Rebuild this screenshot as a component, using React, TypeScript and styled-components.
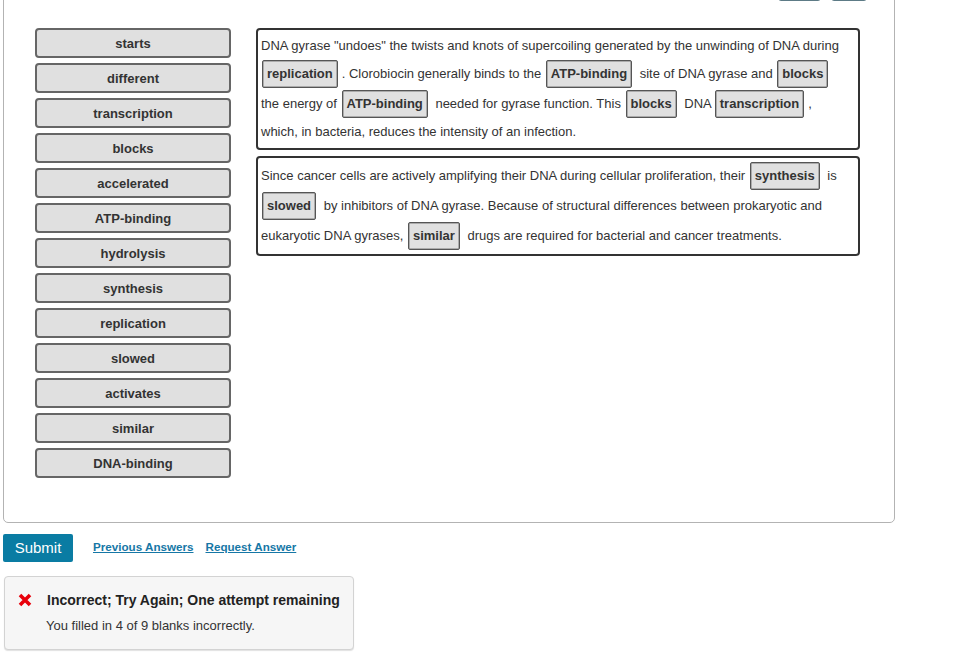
import * as React from 'react';
import styled, { createGlobalStyle } from 'styled-components';

const GlobalStyle = createGlobalStyle`
	html, body {
		margin: 0;
		padding: 0;
		background: #fff;
		font-family: 'Liberation Sans', Arial, Helvetica, sans-serif;
		color: #333;
	}
`;

const Page = styled.div`
	padding: 0 3px;
	width: 964px;
	overflow: hidden;
	height: 657px;
	box-sizing: border-box;
`;

const Card = styled.div`
	margin-top: -36px;
	width: 892px;
	box-sizing: border-box;
	border: 1px solid #b3b3b3;
	border-radius: 5px;
`;

const Toolbar = styled.div`
	display: flex;
	justify-content: flex-end;
	align-items: flex-end;
	gap: 10px;
	height: 36px;
	padding-right: 27px;
`;

interface ToolButtonProps {
	w: number;
}

const ToolButton = styled.div<ToolButtonProps>`
	width: ${props => props.w}px;
	height: 24px;
	box-sizing: border-box;
	border: 1px solid #5d7b86;
	border-radius: 3px;
`;

const Body = styled.div`
	display: flex;
	align-items: flex-start;
	gap: 25px;
	padding: 27px 0 44px 31px;
`;

const TileColumn = styled.div`
	display: flex;
	flex-direction: column;
	gap: 5px;
	width: 196px;
`;

const Tile = styled.div`
	height: 30px;
	box-sizing: border-box;
	border: 2px solid #666;
	border-radius: 4px;
	background: #e0e0e0;
	display: flex;
	align-items: center;
	justify-content: center;
	font-size: 13px;
	font-weight: bold;
	color: #333;
`;

const PanelColumn = styled.div`
	display: flex;
	flex-direction: column;
	gap: 6px;
	width: 604px;
`;

const Panel = styled.div`
	box-sizing: border-box;
	border: 2px solid #333;
	border-radius: 4px;
	padding: 3px 10px 3px 3px;
	font-size: 13px;
	line-height: 26px;
	color: #333;
`;

const Blank = styled.span`
	display: inline-block;
	box-sizing: border-box;
	height: 28px;
	line-height: 26px;
	margin: 1px 4px 1px 1px;
	padding: 0 4px;
	border: 1px solid #555;
	border-radius: 2px;
	background: #e0e0e0;
	font-weight: bold;
	vertical-align: baseline;
	box-shadow: inset 0 0 0 0.5px #777;
`;

const ActionRow = styled.div`
	display: flex;
	align-items: center;
	gap: 20px;
	margin-top: 11px;
`;

const SubmitButton = styled.button`
	height: 28px;
	width: 70px;
	border: none;
	border-radius: 2px;
	background: #0a7ca3;
	color: #fff;
	font-family: inherit;
	font-size: 15px;
	padding: 0 0 1px;
`;

const Links = styled.div`
	display: flex;
	gap: 12px;
	padding-bottom: 4px;
`;

const LinkText = styled.a`
	color: #1677a6;
	font-size: 11.65px;
	font-weight: bold;
	text-decoration: underline;
	cursor: pointer;
`;

const Feedback = styled.div`
	margin-top: 14px;
	margin-left: 1px;
	width: 350px;
	height: 74px;
	box-sizing: border-box;
	border: 1px solid #d3d3d3;
	border-radius: 4px;
	background: #f6f6f6;
	box-shadow: 0 1px 1px rgba(0, 0, 0, 0.12);
	padding: 13px 0 0 13px;
`;

const FeedbackTitle = styled.div`
	display: flex;
	align-items: center;
	gap: 15px;
	font-size: 14px;
	font-weight: bold;
	color: #222;
	height: 20px;
`;

const FeedbackText = styled.div`
	font-size: 13px;
	color: #333;
	margin: 8px 0 0 28px;
`;

const CrossIcon = () => (
	<svg width="14" height="14" viewBox="0 0 14 14">
		<path d="M2 2 L12 12 M12 2 L2 12" stroke="#e8000b" strokeWidth="3.6" strokeLinecap="butt" />
	</svg>
);

const tiles = [
	'starts',
	'different',
	'transcription',
	'blocks',
	'accelerated',
	'ATP-binding',
	'hydrolysis',
	'synthesis',
	'replication',
	'slowed',
	'activates',
	'similar',
	'DNA-binding',
];

export default function App() {
	return (
		<Page>
			<GlobalStyle />
			<Card>
				<Toolbar>
					<ToolButton w={43} />
					<ToolButton w={36} />
				</Toolbar>
				<Body>
					<TileColumn>
						{tiles.map(t => (
							<Tile key={t}>{t}</Tile>
						))}
					</TileColumn>
					<PanelColumn>
						<Panel>
							DNA gyrase "undoes" the twists and knots of supercoiling generated by the unwinding of DNA during{' '}
							<Blank>replication</Blank>. Clorobiocin generally binds to the <Blank>ATP-binding</Blank> site of DNA
							gyrase and <Blank>blocks</Blank> the energy of <Blank>ATP-binding</Blank> needed for gyrase function.
							This <Blank>blocks</Blank> DNA<Blank style={{ marginLeft: 3 }}>transcription</Blank>, which, in
							bacteria, reduces the intensity of an infection.
						</Panel>
						<Panel>
							Since cancer cells are actively amplifying their DNA during cellular proliferation, their{' '}
							<Blank>synthesis</Blank> is <Blank>slowed</Blank> by inhibitors of DNA gyrase. Because of structural
							differences between prokaryotic and eukaryotic DNA gyrases, <Blank>similar</Blank> drugs are required
							for bacterial and cancer treatments.
						</Panel>
					</PanelColumn>
				</Body>
			</Card>
			<ActionRow>
				<SubmitButton>Submit</SubmitButton>
				<Links>
					<LinkText>Previous Answers</LinkText>
					<LinkText>Request Answer</LinkText>
				</Links>
			</ActionRow>
			<Feedback>
				<FeedbackTitle>
					<CrossIcon />
					Incorrect; Try Again; One attempt remaining
				</FeedbackTitle>
				<FeedbackText>You filled in 4 of 9 blanks incorrectly.</FeedbackText>
			</Feedback>
		</Page>
	);
}
